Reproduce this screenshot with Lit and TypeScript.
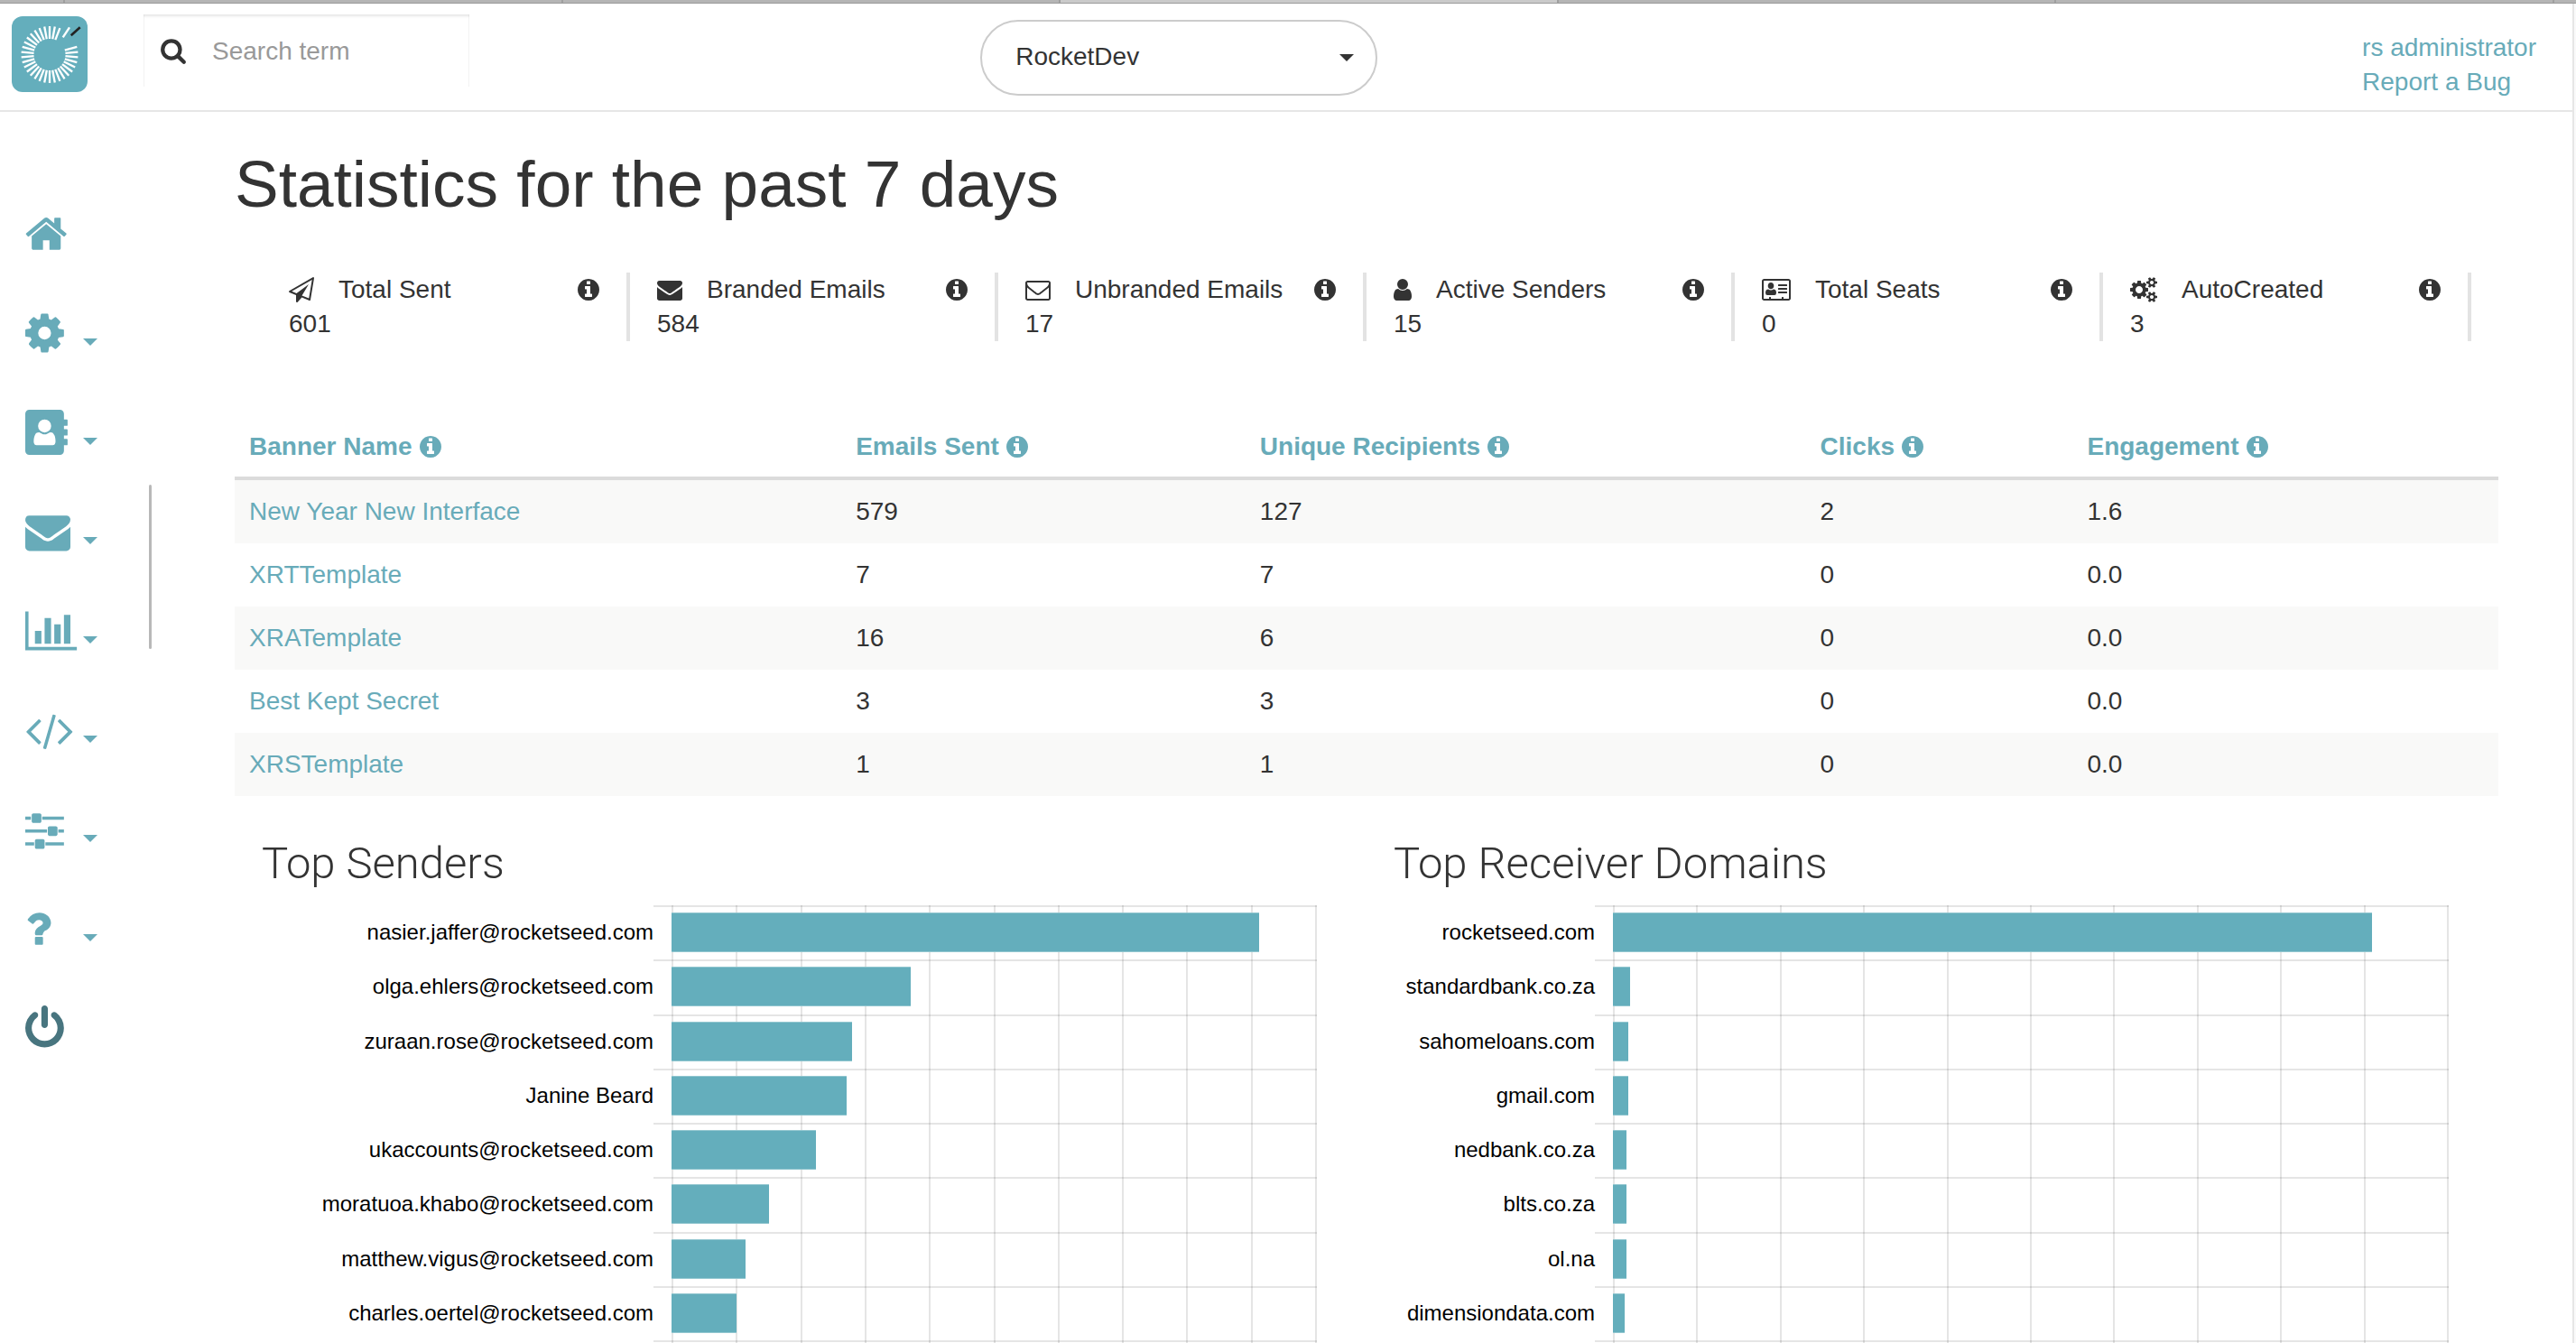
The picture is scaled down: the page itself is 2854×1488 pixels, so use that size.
import { LitElement, html, svg, css, nothing } from "lit";
import { customElement, property } from "lit/decorators.js";

/* ------------------------------------------------------------------ icons */

interface Glyph {
  box: string;
  d: string;
}

const PERSON =
  "M1028 644q0 107-76.5 183t-183.5 76-183.5-76-76.5-183q0-108 76.5-184t183.5-76 183.5 76 76.5 184zM980 892q46 0 82.5 17t60 47.5 39.5 67 24 81 11.5 82.5 3.5 79q0 60-30 101t-85 41h-636q-55 0-85-41t-30-101q0-48 4.5-93.5t18.5-98.5 36.5-91.5 63-64.5 93.5-26h5q7 4 32 19.5t35.5 21 33 17 37 16 35 9 39.5 4.5 39.5-4.5 35-9 37-16 33-17 35.5-21 32-19.5z";

const GLYPHS: Record<string, Glyph> = {
  home: {
    box: "64 0 1664 1792",
    d: "M1472 992v480q0 26-19 45t-45 19h-384v-384h-256v384h-384q-26 0-45-19t-19-45v-480q0-1 .5-3t.5-3l575-474 575 474q1 2 1 6zm223-69l-62 74q-8 9-21 11h-3q-13 0-21-7l-692-577-692 577q-12 8-24 7-13-2-21-11l-62-74q-8-10-7-23.5t11-21.5l719-599q32-26 76-26t76 26l244 204v-195q0-14 9-23t23-9h192q14 0 23 9t9 23v408l219 182q10 8 11 21.5t-7 23.5z",
  },
  cog: {
    box: "128 0 1536 1792",
    d: "M1152 896q0-106-75-181t-181-75-181 75-75 181 75 181 181 75 181-75 75-181zm512-109v222q0 12-8 23t-20 13l-185 28q-19 54-39 91 35 50 107 138 10 12 10 25t-9 23q-27 37-99 108t-94 71q-12 0-26-9l-138-108q-44 23-91 38-16 136-29 186-7 28-36 28h-222q-14 0-24.5-8.5t-11.5-21.5l-28-184q-49-16-90-37l-141 107q-10 9-25 9-14 0-25-11-126-114-165-168-7-10-7-23 0-12 8-23 15-21 51-66.5t54-70.5q-27-50-41-99l-183-27q-13-2-21-12.5t-8-23.5v-222q0-12 8-23t19-13l186-28q14-46 39-92-40-57-107-138-10-12-10-24 0-10 9-23 26-36 98.5-107.5t94.5-71.5q13 0 26 10l138 107q44-23 91-38 16-136 29-186 7-28 36-28h222q14 0 24.5 8.5t11.5 21.5l28 184q49 16 90 37l142-107q9-9 24-9 13 0 25 10 129 119 165 170 7 8 7 22 0 12-8 23-15 21-51 66.5t-54 70.5q26 50 41 98l183 28q13 2 21 12.5t8 23.5z",
  },
  book: {
    box: "0 0 1684 1792",
    d:
      "M160 0h1216q66 0 113 47t47 113v224h112q32 0 32 32v192q0 32-32 32h-112v128h112q32 0 32 32v192q0 32-32 32h-112v128h112q32 0 32 32v192q0 32-32 32h-112v224q0 66-47 113t-113 47h-1216q-66 0-113-47t-47-113v-1472q0-66 47-113t113-47z" +
      PERSON,
  },
  envelope: {
    box: "0 0 1792 1792",
    d: "M1792 710v794q0 66-47 113t-113 47h-1472q-66 0-113-47t-47-113v-794q44 49 101 87 362 246 497 345 57 42 92.5 65.5t94.5 48 110 24.5h2q51 0 110-24.5t94.5-48 92.5-65.5q170-123 498-345 57-39 100-87zm0-294q0 79-49 151t-122 123q-376 261-468 325-10 7-42.5 31t-54 38.5-52 32.5-57.5 27-50 9h-2q-23 0-50-9t-57.5-27-52-32.5-54-38.5-42.5-31q-91-64-262-182.5t-205-142.5q-62-42-117-115.5t-55-136.5q0-78 41.5-130t118.5-52h1472q65 0 112.5 47t47.5 113z",
  },
  envelopeOutline: {
    box: "0 0 1792 1792",
    d: "M1664 1504v-768q-32 36-69 66-268 206-426 338-51 43-83 67t-86.5 48.5-102.5 24.5h-2q-48 0-102.5-24.5t-86.5-48.5-83-67q-158-132-426-338-37-30-69-66v768q0 13 9.5 22.5t22.5 9.5h1472q13 0 22.5-9.5t9.5-22.5zm0-1051v-24.5l-.5-13-3-12.5-5.5-9-9-7.5-14-2.5h-1472q-13 0-22.5 9.5t-9.5 22.5q0 168 147 284 193 152 401 317 6 5 35 29.5t46 37.5 44.5 31.5 50.5 27.5 43 9h2q20 0 43-9t50.5-27.5 44.5-31.5 46-37.5 35-29.5q208-165 401-317 54-43 100.5-115.5t46.5-131.5zm128-37v1088q0 66-47 113t-113 47h-1472q-66 0-113-47t-47-113v-1088q0-66 47-113t113-47h1472q66 0 113 47t47 113z",
  },
  chart: {
    box: "0 0 2048 1792",
    d: "M640 896v512h-256v-512h256zm384-512v1024h-256v-1024h256zm1024 1152v128h-2048v-1536h128v1408h1920zm-640-896v768h-256v-768h256zm384-384v1152h-256v-1152h256z",
  },
  code: {
    box: "0 0 1920 1792",
    d: "M617 1399l-50 50q-10 10-23 10t-23-10l-466-466q-10-10-10-23t10-23l466-466q10-10 23-10t23 10l50 50q10 10 10 23t-10 23l-393 393 393 393q10 10 10 23t-10 23zm591-1067l-373 1291q-4 13-15.5 19.5t-23.5 2.5l-62-17q-13-4-19.5-15.5t-2.5-24.5l373-1291q4-13 15.5-19.5t23.5-2.5l62 17q13 4 19.5 15.5t2.5 24.5zm657 651l-466 466q-10 10-23 10t-23-10l-50-50q-10-10-10-23t10-23l393-393-393-393q-10-10-10-23t10-23l50-50q10-10 23-10t23 10l466 466q10 10 10 23t-10 23z",
  },
  sliders: {
    box: "128 0 1536 1792",
    d: "M480 1408v128h-352v-128h352zm352-128q26 0 45 19t19 45v256q0 26-19 45t-45 19h-256q-26 0-45-19t-19-45v-256q0-26 19-45t45-19h256zm160-384v128h-864v-128h864zm-640-512v128h-224v-128h224zm1312 1024v128h-736v-128h736zm-960-1152q26 0 45 19t19 45v256q0 26-19 45t-45 19h-256q-26 0-45-19t-19-45v-256q0-26 19-45t45-19h256zm640 512q26 0 45 19t19 45v256q0 26-19 45t-45 19h-256q-26 0-45-19t-19-45v-256q0-26 19-45t45-19h256zm320 128v128h-224v-128h224zm0-512v128h-864v-128h864z",
  },
  question: {
    box: "384 0 1024 1792",
    d: "M1088 1256v240q0 16-12 28t-28 12h-240q-16 0-28-12t-12-28v-240q0-16 12-28t28-12h240q16 0 28 12t12 28zm316-600q0 54-15.5 101t-35 76.5-55 59.5-57.5 43.5-61 35.5q-41 23-68.5 65t-27.5 67q0 17-12 32.5t-28 15.5h-240q-15 0-25.5-18.5t-10.5-37.5v-45q0-83 65-156.5t143-108.5q59-27 84-56t25-76q0-42-46.5-74t-107.5-32q-65 0-108 29-35 25-107 115-13 16-31 16-12 0-25-8l-164-125q-13-10-15.5-25t5.5-28q160-266 464-266 80 0 161 31t146 83 106 127.5 41 158.5z",
  },
  power: {
    box: "128 0 1536 1792",
    d: "M1664 896q0 156-61 298t-164 245-245 164-298 61-298-61-245-164-164-245-61-298q0-182 80.5-343t226.5-270q43-32 95.5-25t83.5 50q32 42 24.5 94.5t-49.5 84.5q-98 74-151.5 181t-53.5 228q0 104 40.5 198.5t109.5 163.5 163.5 109.5 198.5 40.5 198.5-40.5 163.5-109.5 109.5-163.5 40.5-198.5q0-121-53.5-228t-151.5-181q-42-32-49.5-84.5t24.5-94.5q31-43 84-50t95 25q146 109 226.5 270t80.5 343zm-640-768v640q0 52-38 90t-90 38-90-38-38-90v-640q0-52 38-90t90-38 90 38 38 90z",
  },
  search: {
    box: "0 0 1792 1792",
    d: "M1216 832q0-185-131.5-316.5t-316.5-131.5-316.5 131.5-131.5 316.5 131.5 316.5 316.5 131.5 316.5-131.5 131.5-316.5zm512 832q0 52-38 90t-90 38q-54 0-90-38l-343-342q-179 124-399 124-143 0-273.5-55.5t-225-150-150-225-55.5-273.5 55.5-273.5 150-225 225-150 273.5-55.5 273.5 55.5 225 150 150 225 55.5 273.5q0 220-124 399l343 343q37 37 37 90z",
  },
  info: {
    box: "128 0 1536 1792",
    d: "M1152 1376v-160q0-14-9-23t-23-9h-96v-512q0-14-9-23t-23-9h-320q-14 0-23 9t-9 23v160q0 14 9 23t23 9h96v320h-96q-14 0-23 9t-9 23v160q0 14 9 23t23 9h448q14 0 23-9t9-23zm-128-896v-160q0-14-9-23t-23-9h-192q-14 0-23 9t-9 23v160q0 14 9 23t23 9h192q14 0 23-9t9-23zm640 416q0 209-103 385.5t-279.5 279.5-385.5 103-385.5-103-279.5-279.5-103-385.5 103-385.5 279.5-279.5 385.5-103 385.5 103 279.5 279.5 103 385.5z",
  },
  plane: {
    box: "0 0 1792 1792",
    d: "M1764 11q33 24 27 64l-256 1536q-5 29-32 45-14 8-31 8-11 0-24-5l-527-215-298 327q-18 21-47 21-14 0-23-4-19-7-30-23.5t-11-36.5v-452l-472-193q-37-14-40-55-3-39 32-59l1664-960q35-21 68 2zm-342 1499l221-1323-1434 827 336 137 863-639-478 797z",
  },
  user: {
    box: "256 0 1280 1792",
    d: "M1536 1399q0 109-62.5 187t-150.5 78h-854q-88 0-150.5-78t-62.5-187q0-85 8.5-160.5t31.5-152 58.5-131 94-89 134.5-34.5q131 128 313 128t313-128q76 0 134.5 34.5t94 89 58.5 131 31.5 152 8.5 160.5zm-256-887q0 159-112.5 271.5t-271.5 112.5-271.5-112.5-112.5-271.5 112.5-271.5 271.5-112.5 271.5 112.5 112.5 271.5z",
  },
  card: {
    box: "0 0 2048 1792",
    d:
      "M160 128h1728q66 0 113 47t47 113v1216q0 66-47 113t-113 47h-1728q-66 0-113-47t-47-113v-1216q0-66 47-113t113-47z" +
      "M160 256q-32 0-32 32v1216q0 32 32 32h352v-96q0-32 32-32h64q32 0 32 32v96h768v-96q0-32 32-32h64q32 0 32 32v96h352q32 0 32-32v-1216q0-32-32-32z" +
      "M640 384c120 0 212 104 212 232s-92 232-212 232-212-104-212-232 92-232 212-232z" +
      "M460 860q80 68 180 68t180-68q204 0 204 260 0 160-132 160h-504q-132 0-132-160 0-260 204-260z" +
      "M1184 512h576q32 0 32 32v64q0 32-32 32h-576q-32 0-32-32v-64q0-32 32-32z" +
      "M1184 768h576q32 0 32 32v64q0 32-32 32h-576q-32 0-32-32v-64q0-32 32-32z" +
      "M1184 1024h576q32 0 32 32v64q0 32-32 32h-576q-32 0-32-32v-64q0-32 32-32z",
  },
  cogs: {
    box: "0 0 1920 1792",
    d: "M896 896q0-106-75-181t-181-75-181 75-75 181 75 181 181 75 181-75 75-181zm768 512q0-52-38-90t-90-38-90 38-38 90q0 53 37.5 90.5t90.5 37.5 90.5-37.5 37.5-90.5zm0-1024q0-52-38-90t-90-38-90 38-38 90q0 53 37.5 90.5t90.5 37.5 90.5-37.5 37.5-90.5zm-384 421v185q0 10-7 19.5t-16 10.5l-155 24q-11 35-32 76 34 48 90 115 7 11 7 20 0 12-7 19-23 30-82.5 89.5t-78.5 59.5q-11 0-21-7l-115-90q-37 19-77 31-11 108-23 155-7 24-30 24h-186q-11 0-20-7.5t-10-17.5l-23-153q-34-10-75-31l-118 89q-7 7-20 7-11 0-21-8-144-133-144-160 0-9 7-19 10-14 41-53t47-61q-23-44-35-82l-152-24q-10-1-17-9.5t-7-19.5v-185q0-10 7-19.5t16-10.5l155-24q11-35 32-76-34-48-90-115-7-11-7-20 0-12 7-20 22-30 82-89t79-59q11 0 21 7l115 90q34-18 77-32 11-108 23-154 7-24 30-24h186q11 0 20 7.5t10 17.5l23 153q34 10 75 31l118-89q8-7 20-7 11 0 21 8 144 133 144 160 0 8-7 19-12 16-42 54t-45 60q23 48 34 82l152 23q10 2 17 10.5t7 19.5zm640 533v140q0 16-149 31-12 27-30 52 51 113 51 138 0 4-4 7-122 71-124 71-8 0-46-47t-52-68q-20 2-30 2t-30-2q-14 21-52 68t-46 47q-2 0-124-71-4-3-4-7 0-25 51-138-18-25-30-52-149-15-149-31v-140q0-16 149-31 13-29 30-52-51-113-51-138 0-4 4-7 4-2 35-20t59-34 30-16q8 0 46 46.5t52 67.5q20-2 30-2t30 2q51-71 92-112l6-2q4 0 124 70 4 3 4 7 0 25-51 138 17 23 30 52 149 15 149 31zm0-1024v140q0 16-149 31-12 27-30 52 51 113 51 138 0 4-4 7-122 71-124 71-8 0-46-47t-52-68q-20 2-30 2t-30-2q-14 21-52 68t-46 47q-2 0-124-71-4-3-4-7 0-25 51-138-18-25-30-52-149-15-149-31v-140q0-16 149-31 13-29 30-52-51-113-51-138 0-4 4-7 4-2 35-20t59-34 30-16q8 0 46 46.5t52 67.5q20-2 30-2t30 2q51-71 92-112l6-2q4 0 124 70 4 3 4 7 0 25-51 138 17 23 30 52 149 15 149 31z",
  },
};

@customElement("app-icon")
class AppIcon extends LitElement {
  static styles = css`
    :host {
      display: inline-flex;
      height: 28px;
    }
    .glyph {
      display: block;
      height: 100%;
      width: auto;
      fill: currentColor;
      overflow: visible;
    }
  `;
  @property() name = "info";
  render() {
    const g = GLYPHS[this.name];
    return html`<svg class="glyph" viewBox=${g.box} aria-hidden="true">
      <path fill-rule="evenodd" d=${g.d}></path>
    </svg>`;
  }
}

const caret = html`<svg class="caret" viewBox="0 0 16 8" width="16" height="8" aria-hidden="true">
  <path d="M0 0h16l-8 8z" fill="currentColor"></path>
</svg>`;

/* ------------------------------------------------------------------- logo */

const RAYS = 34;
const MISSING_RAYS = [3, 4, 5, 6];

@customElement("app-logo")
class AppLogo extends LitElement {
  static styles = css`
    :host,
    .mark {
      display: block;
    }
  `;
  render() {
    const rays = Array.from({ length: RAYS }, (_, i) => i).filter((i) => !MISSING_RAYS.includes(i));
    return html`<svg class="mark" width="84" height="84" viewBox="0 0 84 84" role="img" aria-label="Rocketseed">
      <rect width="84" height="84" rx="12" fill="#64aebc"></rect>
      ${rays.map(
        (i) => svg`<line x1="42" y1="11" x2="42" y2="25" stroke="#fff" stroke-width="2.3"
          transform="rotate(${(i * 360) / RAYS} 42 42.5)"></line>`,
      )}
      <line x1="56.7" y1="23.3" x2="64" y2="12.3" stroke="#fff" stroke-width="2.4"></line>
      <line x1="65.7" y1="21.3" x2="75.7" y2="12.3" stroke="#222" stroke-width="2.6"></line>
    </svg>`;
  }
}

/* -------------------------------------------------------------- bar chart */

interface Bar {
  label: string;
  value: number;
}

@customElement("bar-chart")
class BarChart extends LitElement {
  static styles = css`
    :host {
      display: grid;
      --labels: 434px;
      --tick: 20px;
    }
    :host([compact]) {
      --labels: 223px;
    }
    .lines,
    .rows {
      grid-area: 1 / 1;
    }
    .lines {
      display: grid;
      grid-auto-flow: column;
      grid-auto-columns: 1fr;
      margin-left: calc(var(--labels) + var(--tick));
      border-right: 2px solid rgba(0, 0, 0, 0.1);
    }
    .line {
      border-left: 2px solid rgba(0, 0, 0, 0.1);
    }
    .rows {
      display: grid;
      grid-auto-rows: 1fr;
      height: 482px;
      margin: 0 0 4px;
      padding: 0;
      list-style: none;
    }
    .row {
      display: grid;
      grid-template-columns: var(--labels) 1fr;
      align-items: center;
    }
    .label {
      font-size: 24px;
      line-height: 28px;
      color: #000;
      text-align: right;
      white-space: nowrap;
    }
    .track {
      align-self: stretch;
      display: flex;
      align-items: center;
      padding-left: var(--tick);
      background: linear-gradient(rgba(0, 0, 0, 0.1), rgba(0, 0, 0, 0.1)) top / 100% 2px no-repeat;
    }
    .row:last-child .track {
      box-shadow: 0 2px rgba(0, 0, 0, 0.1);
    }
    .bar {
      box-sizing: border-box;
      height: 44px;
      background: #64aebc;
      border: 0 solid #93c7d0;
      border-width: 1px 0;
    }
  `;
  @property({ attribute: false }) bars: Bar[] = [];
  @property({ type: Number }) max = 1;
  @property({ type: Number }) steps = 10;
  render() {
    return html`
      <div class="lines">${Array.from({ length: this.steps }, () => html`<span class="line"></span>`)}</div>
      <ol class="rows">
        ${this.bars.map(
          (b) => html`<li class="row">
            <span class="label">${b.label}</span>
            <span class="track"><span class="bar" style="width:${(b.value / this.max) * 100}%"></span></span>
          </li>`,
        )}
      </ol>
    `;
  }
}

/* ------------------------------------------------------------------- data */

const NAV = [
  { icon: "home", label: "Home", menu: false },
  { icon: "cog", label: "Settings", menu: true },
  { icon: "book", label: "Contacts", menu: true },
  { icon: "envelope", label: "Mail", menu: true },
  { icon: "chart", label: "Reports", menu: true },
  { icon: "code", label: "Code", menu: true },
  { icon: "sliders", label: "Options", menu: true },
  { icon: "question", label: "Help", menu: true },
  { icon: "power", label: "Log out", menu: false },
];

const STATS = [
  { icon: "plane", label: "Total Sent", value: "601" },
  { icon: "envelope", label: "Branded Emails", value: "584" },
  { icon: "envelopeOutline", label: "Unbranded Emails", value: "17" },
  { icon: "user", label: "Active Senders", value: "15" },
  { icon: "card", label: "Total Seats", value: "0" },
  { icon: "cogs", label: "AutoCreated", value: "3" },
];

const COLUMNS = ["Banner Name", "Emails Sent", "Unique Recipients", "Clicks", "Engagement"];

const BANNERS = [
  ["New Year New Interface", "579", "127", "2", "1.6"],
  ["XRTTemplate", "7", "7", "0", "0.0"],
  ["XRATemplate", "16", "6", "0", "0.0"],
  ["Best Kept Secret", "3", "3", "0", "0.0"],
  ["XRSTemplate", "1", "1", "0", "0.0"],
];

const SENDERS: Bar[] = [
  { label: "nasier.jaffer@rocketseed.com", value: 182 },
  { label: "olga.ehlers@rocketseed.com", value: 74 },
  { label: "zuraan.rose@rocketseed.com", value: 56 },
  { label: "Janine Beard", value: 54.4 },
  { label: "ukaccounts@rocketseed.com", value: 44.8 },
  { label: "moratuoa.khabo@rocketseed.com", value: 30.2 },
  { label: "matthew.vigus@rocketseed.com", value: 23 },
  { label: "charles.oertel@rocketseed.com", value: 20.2 },
];

const DOMAINS: Bar[] = [
  { label: "rocketseed.com", value: 454 },
  { label: "standardbank.co.za", value: 10 },
  { label: "sahomeloans.com", value: 9 },
  { label: "gmail.com", value: 9 },
  { label: "nedbank.co.za", value: 8 },
  { label: "blts.co.za", value: 8 },
  { label: "ol.na", value: 8 },
  { label: "dimensiondata.com", value: 7 },
];

/* -------------------------------------------------------------------- app */

@customElement("app-root")
class AppRoot extends LitElement {
  static styles = css`
    :host {
      display: block;
      position: relative;
      min-height: 100vh;
      box-sizing: border-box;
      background: #fafafa;
      color: #333;
      font-family: "Liberation Sans", Arial, sans-serif;
      font-size: 28px;
      line-height: 38px;
    }
    a {
      color: #68abb9;
      text-decoration: none;
    }

    .tabs {
      display: flex;
      height: 3px;
      padding-right: 24px;
      background: #b5b5b5;
      border-bottom: 1px solid #9b9b9b;
    }
    .tab {
      flex: 1;
      border-right: 2px solid #9f9f9f;
    }
    .tab-edge {
      flex: 0 0 70px;
    }
    .tab-active {
      background: #cacaca;
    }

    .page {
      min-height: calc(100vh - 4px);
      margin-right: 2px;
      border-right: 2px solid #e6e6e6;
      background: #fff;
    }

    .header {
      display: grid;
      grid-template-columns: 146px 13fr 440px 18fr;
      align-items: start;
      padding: 12px 40px 0 13px;
      height: 106px;
      border-bottom: 2px solid #e6e6e6;
    }
    .logo {
      margin-top: 2px;
    }
    .search {
      display: flex;
      align-items: center;
      gap: 28px;
      box-sizing: border-box;
      width: 361px;
      height: 80px;
      padding-left: 18px;
      box-shadow: inset 0 3px 3px -1px rgba(0, 0, 0, 0.1), inset 1px 0 #f6f6f6, inset -1px 0 #f6f6f6;
    }
    .search app-icon {
      height: 30px;
    }
    .search-input {
      flex: 1;
      min-width: 0;
      height: 40px;
      padding: 2px 0 0;
      border: 0;
      outline: 0;
      background: none;
      font: inherit;
      color: #333;
    }
    .search-input::placeholder {
      color: #999;
      opacity: 1;
    }
    .picker {
      display: grid;
      align-items: center;
      margin-top: 6px;
      color: #333;
    }
    .picker-select,
    .picker .caret {
      grid-area: 1 / 1;
    }
    .picker-select {
      appearance: none;
      height: 84px;
      width: 100%;
      padding: 0 60px 2px 37px;
      border: 2px solid #ccc;
      border-radius: 42px;
      background: #fff;
      font: inherit;
      color: inherit;
    }
    .picker .caret {
      justify-self: end;
      margin-right: 26px;
      pointer-events: none;
    }
    .account {
      justify-self: end;
      display: flex;
      flex-direction: column;
      margin-top: 18px;
    }

    .body {
      display: grid;
      grid-template-columns: 168px 1fr;
    }

    .sidebar {
      display: grid;
      grid-template-columns: 1fr 3px;
    }
    .nav {
      display: flex;
      flex-direction: column;
      gap: 60px;
      padding: 110px 0 0 28px;
    }
    .nav-item {
      display: grid;
      grid-template-columns: 64px 16px;
      align-items: start;
      padding: 0;
      border: 0;
      background: none;
      font: inherit;
      text-align: left;
      color: #68abb9;
    }
    .nav-item app-icon {
      height: 50px;
    }
    .nav-item .caret {
      margin-top: 31px;
    }
    .nav-item:last-child {
      color: #48757f;
    }
    .scroll-thumb {
      height: 182px;
      margin-top: 413px;
      border-radius: 2px;
      background: #b8b8b8;
    }

    .main {
      padding: 40px 82px 0 92px;
    }
    .title {
      margin: 0 0 58px;
      font-size: 73px;
      line-height: 80px;
      font-weight: 400;
    }

    .stats {
      display: flex;
      margin: 0 30px 82px;
      padding: 0;
      list-style: none;
    }
    .stat {
      box-sizing: border-box;
      flex: 1;
      padding: 0 30px;
      border-right: 4px solid #e3e3e3;
    }
    .stat-head {
      display: flex;
      align-items: center;
      gap: 27px;
      height: 38px;
      white-space: nowrap;
    }
    .stat-head app-icon:last-child {
      margin-left: auto;
    }
    .stat-value {
      display: block;
    }

    .banners {
      width: 100%;
      table-layout: fixed;
      border-collapse: collapse;
    }
    .col-name {
      width: 26.8%;
    }
    .col-sent {
      width: 17.85%;
    }
    .col-unique {
      width: 24.75%;
    }
    .col-clicks {
      width: 11.8%;
    }
    .banners th,
    .banners td {
      padding: 16px;
      text-align: left;
      line-height: 38px;
    }
    .banners th {
      padding-bottom: 14px;
      color: #68abb9;
      border-bottom: 4px solid #dbdbdb;
    }
    .banners tbody tr:nth-child(odd) {
      background: #f9f9f8;
    }
    .th {
      display: flex;
      align-items: center;
      gap: 8px;
      height: 38px;
    }

    .charts {
      display: grid;
      grid-template-columns: 1fr 1fr;
      margin-top: 47px;
    }
    .panel {
      padding: 0 55px 0 30px;
    }
    .panel-title {
      margin: 0 0 18px;
      font-family: Roboto, "Liberation Sans", sans-serif;
      font-size: 49px;
      line-height: 56px;
      font-weight: 300;
    }
  `;

  render() {
    return html`
      <div class="tabs" aria-hidden="true">
        <span class="tab tab-edge"></span>
        <span class="tab"></span>
        <span class="tab"></span>
        <span class="tab tab-active"></span>
        <span class="tab"></span>
        <span class="tab"></span>
      </div>
      <div class="page">
        <header class="header">
          <a class="logo" href="#"><app-logo></app-logo></a>
          <label class="search">
            <app-icon name="search"></app-icon>
            <input class="search-input" type="text" placeholder="Search term" aria-label="Search term" />
          </label>
          <div class="picker">
            <select class="picker-select" aria-label="Company">
              <option>RocketDev</option>
            </select>
            ${caret}
          </div>
          <div class="account">
            <a href="#">rs administrator</a>
            <a href="#">Report a Bug</a>
          </div>
        </header>

        <div class="body">
          <aside class="sidebar">
            <nav class="nav">
              ${NAV.map(
                (n) => html`<button class="nav-item" type="button" aria-label=${n.label}>
                  <app-icon name=${n.icon}></app-icon>${n.menu ? caret : nothing}
                </button>`,
              )}
            </nav>
            <div class="scroll-thumb"></div>
          </aside>

          <main class="main">
            <h1 class="title">Statistics for the past 7 days</h1>

            <ul class="stats">
              ${STATS.map(
                (s) => html`<li class="stat">
                  <span class="stat-head"
                    ><app-icon name=${s.icon}></app-icon>${s.label}<app-icon name="info"></app-icon
                  ></span>
                  <span class="stat-value">${s.value}</span>
                </li>`,
              )}
            </ul>

            <table class="banners">
              <colgroup>
                <col class="col-name" />
                <col class="col-sent" />
                <col class="col-unique" />
                <col class="col-clicks" />
                <col />
              </colgroup>
              <thead>
                <tr>
                  ${COLUMNS.map(
                    (c) => html`<th scope="col"><span class="th">${c}<app-icon name="info"></app-icon></span></th>`,
                  )}
                </tr>
              </thead>
              <tbody>
                ${BANNERS.map(
                  ([name, ...cells]) => html`<tr>
                    <td><a href="#">${name}</a></td>
                    ${cells.map((c) => html`<td>${c}</td>`)}
                  </tr>`,
                )}
              </tbody>
            </table>

            <div class="charts">
              <section class="panel">
                <h2 class="panel-title">Top Senders</h2>
                <bar-chart .bars=${SENDERS} max="200"></bar-chart>
              </section>
              <section class="panel">
                <h2 class="panel-title">Top Receiver Domains</h2>
                <bar-chart compact .bars=${DOMAINS} max="500"></bar-chart>
              </section>
            </div>
          </main>
        </div>
      </div>
    `;
  }
}
